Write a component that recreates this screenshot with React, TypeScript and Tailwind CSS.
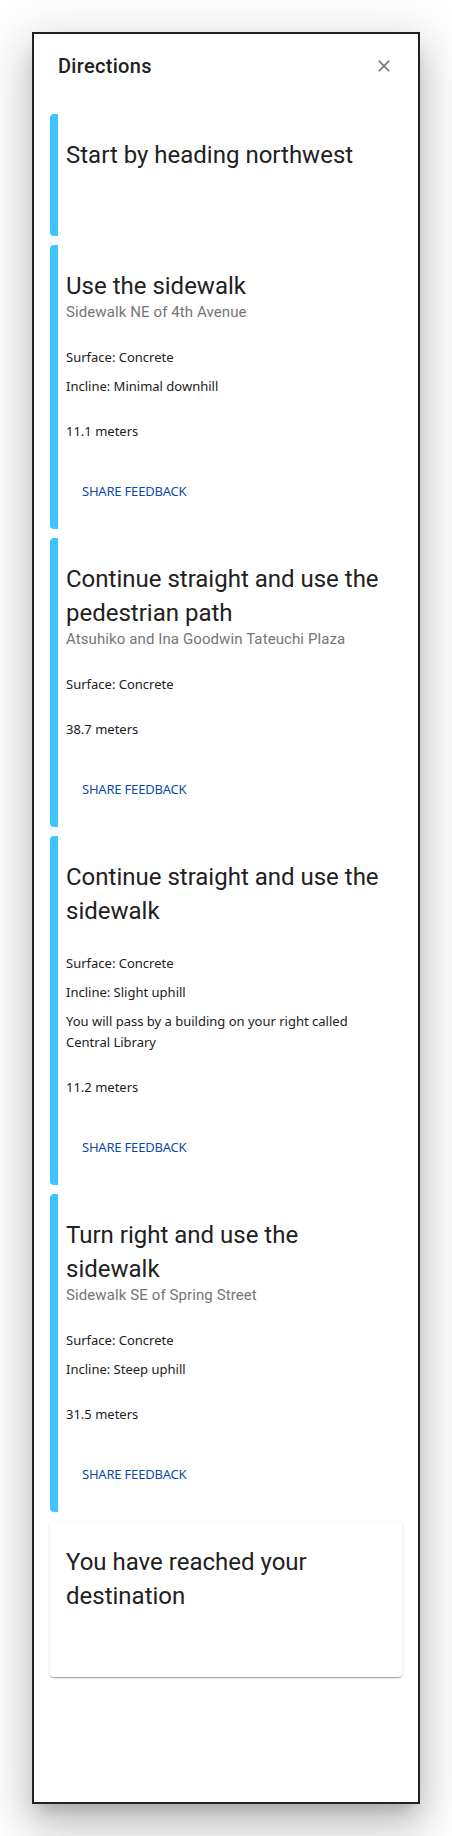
type Step = {
  title: string;
  subtitle?: string;
  details?: string[];
  distance?: string;
};

const STEPS: Step[] = [
  { title: 'Start by heading northwest' },
  {
    title: 'Use the sidewalk',
    subtitle: 'Sidewalk NE of 4th Avenue',
    details: ['Surface: Concrete', 'Incline: Minimal downhill'],
    distance: '11.1 meters',
  },
  {
    title: 'Continue straight and use the pedestrian path',
    subtitle: 'Atsuhiko and Ina Goodwin Tateuchi Plaza',
    details: ['Surface: Concrete'],
    distance: '38.7 meters',
  },
  {
    title: 'Continue straight and use the sidewalk',
    details: [
      'Surface: Concrete',
      'Incline: Slight uphill',
      'You will pass by a building on your right called Central Library',
    ],
    distance: '11.2 meters',
  },
  {
    title: 'Turn right and use the sidewalk',
    subtitle: 'Sidewalk SE of Spring Street',
    details: ['Surface: Concrete', 'Incline: Steep uphill'],
    distance: '31.5 meters',
  },
];

// body copy: narrow humanist face standing in for Segoe UI
const bodyFont = "font-['Noto_Sans','Open_Sans',sans-serif] text-[13px] leading-[21px]";

function CloseIcon() {
  return (
    <svg viewBox="0 0 24 24" className="h-5 w-5 fill-current">
      <path d="M19 6.41 17.59 5 12 10.59 6.41 5 5 6.41 10.59 12 5 17.59 6.41 19 12 13.41 17.59 19 19 17.59 13.41 12z" />
    </svg>
  );
}

function StepCard({ step }: { step: Step }) {
  const hasBody = !!step.distance;
  return (
    <div
      className={`rounded border-l-8 border-[#40c4ff] bg-white pl-2 pr-4 pt-6 ${hasBody ? 'pb-[19px]' : 'pb-16'}`}
    >
      <h3 className="text-2xl leading-[34px] text-[#212121]">{step.title}</h3>
      {step.subtitle && (
        <p className="-mt-px text-[15px] leading-5 tracking-[0.1px] text-[#757575]">{step.subtitle}</p>
      )}
      {hasBody && (
        <>
          <div className={`mt-[25px] flex flex-col gap-2 text-[#212121] ${bodyFont}`}>
            {step.details?.map(d => (
              <p key={d}>{d}</p>
            ))}
          </div>
          <p className={`mt-6 text-[#212121] ${bodyFont}`}>{step.distance}</p>
          <button
            className={`mt-[31px] ml-2 block rounded px-2 py-2 uppercase tracking-[-0.2px] text-[#0e4ba8] ${bodyFont}`}
          >
            Share feedback
          </button>
        </>
      )}
    </div>
  );
}

export default function App() {
  return (
    <div className="h-screen bg-white p-8 font-['Roboto',sans-serif]">
      <div className="flex h-full flex-col overflow-hidden border-2 border-[#212121] bg-white shadow-[0px_11px_15px_-7px_rgba(0,0,0,0.2),0px_24px_38px_3px_rgba(0,0,0,0.14),0px_9px_46px_8px_rgba(0,0,0,0.12)]">
        <div className="flex items-center justify-between px-6 py-4">
          <h2 className="text-xl leading-8 font-medium tracking-[0.3px] text-[#212121]">Directions</h2>
          <button className="text-[#757575]" aria-label="Close">
            <CloseIcon />
          </button>
        </div>
        <div className="flex flex-col gap-[9px] px-4 pt-4">
          {STEPS.map(step => (
            <StepCard key={step.title} step={step} />
          ))}
          <div className="rounded bg-white px-4 pt-6 pb-16 shadow-[0px_2px_1px_-1px_rgba(0,0,0,0.2),0px_1px_1px_0px_rgba(0,0,0,0.14),0px_1px_3px_0px_rgba(0,0,0,0.12)]">
            <h3 className="text-2xl leading-[34px] text-[#212121]">You have reached your destination</h3>
          </div>
        </div>
      </div>
    </div>
  );
}
